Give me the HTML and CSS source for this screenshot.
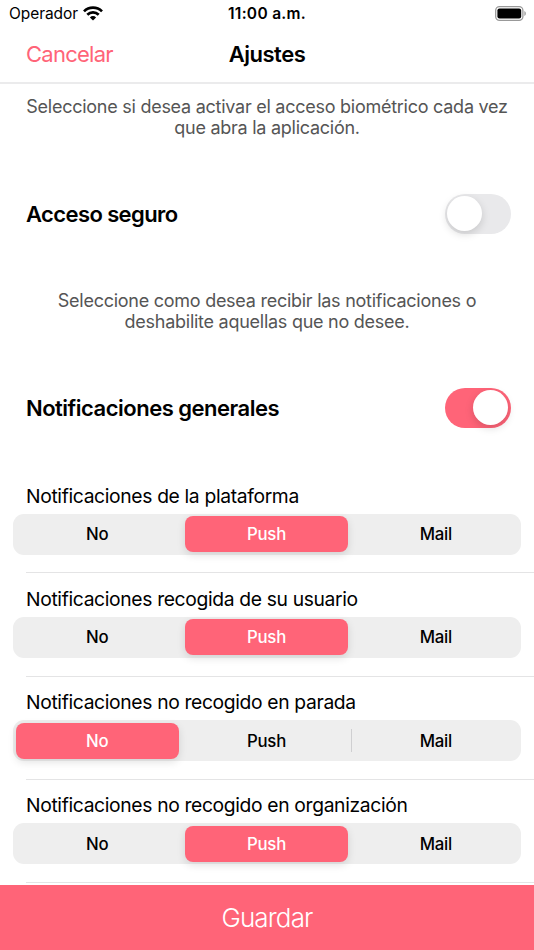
FILE: index.html
```html
<!DOCTYPE html>
<html lang="es">
<head>
<meta charset="utf-8">
<title>Ajustes</title>
<link rel="stylesheet" href="styles.css">
</head>
<body>
<div class="screen">
  <div class="status">
    <div class="carrier"><span>Operador</span>
      <svg class="wifi" width="20" height="15" viewBox="0 0 20 15"><g fill="none" stroke="#000" stroke-width="2.7"><path d="M1 5.400a12.800 12.800 0 0 1 18 0"/><path d="M4.300 8.800a8.100 8.100 0 0 1 11.400 0"/></g><path d="M6.900 11.400a4.400 4.400 0 0 1 6.200 0L10 14.500z"/></svg>
    </div>
    <div class="clock">11:00 a.m.</div>
    <svg class="battery" width="32" height="15" viewBox="0 0 32 15"><rect x=".7" y=".7" width="27.2" height="13.6" rx="3.8" fill="none" stroke="#999" stroke-width="1.3"/><rect x="2.4" y="2.4" width="23.8" height="10.2" rx="2.1"/><path d="M29.4 5v5c1.900-.8 1.900-4.200 0-5z" fill="#999"/></svg>
  </div>
  <header class="nav">
    <span class="cancel">Cancelar</span>
    <h1 class="title">Ajustes</h1>
    <span></span>
  </header>
  <main class="content">
    <p class="hint">Seleccione si desea activar el acceso biométrico cada vez<br>que abra la aplicación.</p>
    <div class="toggle-row">
      <h2 class="heading heading-access">Acceso seguro</h2>
      <span class="switch"><span class="knob"></span></span>
    </div>
    <p class="hint">Seleccione como desea recibir las notificaciones o<br>deshabilite aquellas que no desee.</p>
    <div class="toggle-row second">
      <h2 class="heading">Notificaciones generales</h2>
      <span class="switch on"><span class="knob"></span></span>
    </div>
    <section class="options">
      <div class="option">
        <div class="label">Notificaciones de la plataforma</div>
        <div class="segments"><span class="segment">No</span><span class="segment selected">Push</span><span class="segment">Mail</span></div>
      </div>
      <div class="option">
        <div class="label">Notificaciones recogida de su usuario</div>
        <div class="segments"><span class="segment">No</span><span class="segment selected">Push</span><span class="segment">Mail</span></div>
      </div>
      <div class="option">
        <div class="label">Notificaciones no recogido en parada</div>
        <div class="segments"><span class="segment selected">No</span><span class="segment">Push</span><span class="segment divided">Mail</span></div>
      </div>
      <div class="option">
        <div class="label">Notificaciones no recogido en organización</div>
        <div class="segments"><span class="segment">No</span><span class="segment selected">Push</span><span class="segment">Mail</span></div>
      </div>
    </section>
  </main>
  <footer class="save"><span>Guardar</span></footer>
</div>
</body>
</html>
```
FILE: styles.css
```css
* { box-sizing: border-box; }
body { margin: 0; background: #fff; color: #000; font-family: Inter, "Liberation Sans", sans-serif; font-feature-settings: "calt" 0; }
h1, h2, p { margin: 0; }
.screen { width: 534px; height: 950px; overflow: hidden; display: flex; flex-direction: column; }

.status { height: 27px; flex: none; display: grid; grid-template-columns: 1fr auto 1fr; align-items: center; padding: 0 7px 0 9px; font-size: 15.5px; line-height: 27px; }
.carrier { display: flex; align-items: center; gap: 5px; letter-spacing: -.06px; }
.wifi { display: block; margin-top: -1px; }
.clock { font-weight: 600; letter-spacing: .3px; padding-right: 2px; }
.battery { justify-self: end; }

.nav { height: 57px; flex: none; display: grid; grid-template-columns: 1fr auto 1fr; align-items: center; padding: 0 26px 2px; border-bottom: 2px solid #ebebec; font-size: 22px; line-height: 28px; }
.cancel { color: #ff6478; letter-spacing: -.75px; }
.title { font-size: 22px; font-weight: 600; letter-spacing: -.5px; }

.content { flex: 1; min-height: 0; overflow: hidden; padding-top: 12px; }
.hint { height: 43px; font-size: 18px; line-height: 21px; text-align: center; color: #555; white-space: nowrap; letter-spacing: -.26px; }
.toggle-row { height: 151px; display: flex; align-items: center; justify-content: space-between; padding: 0 23.5px 2px 26px; }
.toggle-row.second { height: 137.3px; padding-bottom: 0; align-items: flex-start; padding-top: 54.700px; }
.toggle-row.second .heading { margin-top: 6px; }
.heading { font-size: 22px; line-height: 28px; font-weight: 600; white-space: nowrap; letter-spacing: -.5px; }
.heading-access { letter-spacing: -.6px; }
.switch { width: 66px; height: 40px; border-radius: 20px; padding: 2.5px; background: #e9e9eb; display: flex; }
.switch.on { background: #ff6478; justify-content: flex-end; }
.knob { width: 35px; height: 35px; border-radius: 50%; background: #fff; box-shadow: 0 3px 8px rgba(0,0,0,.15); }

.option { height: 103.2px; padding: 13.4px 13px 0; background: linear-gradient(#e4e4e5, #e4e4e5) 13px 100% / 100% 1px no-repeat; background-position: 26px 100%; }
.label { height: 30px; padding-left: 13px; font-size: 19.3px; line-height: 24px; white-space: nowrap; letter-spacing: -.35px; }
.segments { height: 41px; display: grid; grid-template-columns: repeat(3, 1fr); column-gap: 6px; border-radius: 11px; background: #eee; padding: 2.5px 3.5px 2.5px 2.5px; font-size: 16.8px; font-weight: 500; letter-spacing: -.25px; }
.segment { display: flex; align-items: center; justify-content: center; border-radius: 8px; }
.selected { background: #ff6478; color: #fff; box-shadow: 0 3px 8px rgba(0,0,0,.12); }
.divided { position: relative; }
.divided::before { content: ""; position: absolute; left: -3px; top: 6.5px; width: 1px; height: 23px; background: #cfcfd1; }

.save { height: 65px; flex: none; background: #ff6478; color: #fff; font-size: 26px; font-weight: 300; letter-spacing: -.85px; display: flex; align-items: center; justify-content: center; }
```
